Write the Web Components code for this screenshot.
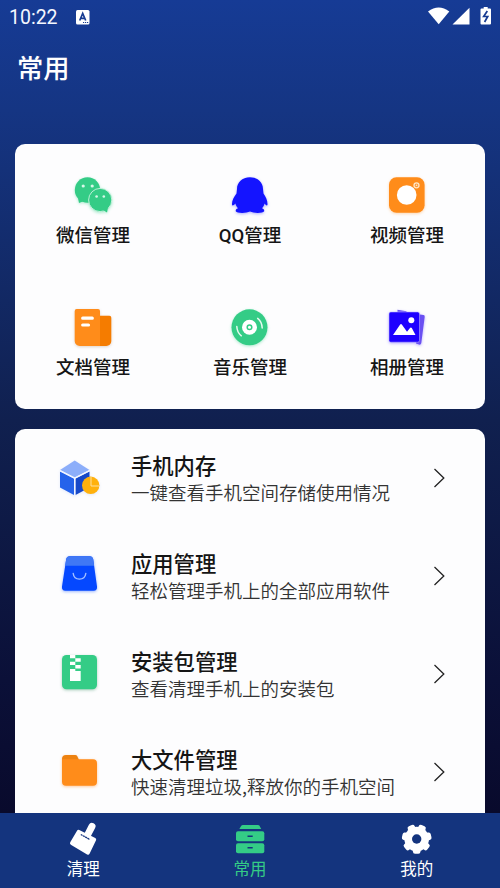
<!DOCTYPE html>
<html lang="zh-CN">
<head>
<meta charset="utf-8">
<title>常用</title>
<style>
html,body{margin:0;height:100%}
body{font-family:Roboto,"Noto Sans CJK SC",sans-serif;overflow:hidden}
</style>
</head>
<body>
<phone-app></phone-app>
<script>
const icons = {
wechat:['0 0 40 40','rgba(52,204,134,.4)',`<g fill="#34cc86"><circle cx="14.5" cy="15" r="12.7"/><path d="M5 23l1 5 5-2z"/><circle cx="27.2" cy="25" r="11.6" stroke="#c9f3df" stroke-width=".9"/><path d="M30 35l4 2.5 1-5z"/></g><g fill="#d8f7e8"><circle cx="10.2" cy="11" r="1.6"/><circle cx="19.2" cy="11" r="1.6"/><circle cx="23.6" cy="21.5" r="1.3"/><circle cx="30.8" cy="21.5" r="1.3"/></g>`],
qq:['0 0 40 40','rgba(20,20,255,.35)',`<path fill="#1414ff" d="M20 2.3C12 2.3 7 7.5 7 14L6.500 18.5C4 22 1.800 25.500 2 29.5C2.2 31.500 4.3 29.800 5.4 28.500C6 30.500 6.800 32 8 33.2C6 34 5.500 35 5.800 36.2C6.800 38.400 16 38.400 20 36.600C24 38.400 33 38.400 34.100 36.2C34.500 35 33.800 34 32 33.2C33.200 32 34 30.500 34.500 28.500C35.600 29.800 37.2 31.500 37.500 29.5C37.700 25.500 35.800 22 33.500 18.5L33 14C33 7.5 28 2.3 20 2.3Z"/>`],
video:['0 0 40 40','rgba(255,140,26,.35)',`<rect x="2" y="2.3" width="35.6" height="35.4" rx="7.5" fill="#ff8c1a"/><circle cx="19.7" cy="20" r="9.8" fill="#fff"/><circle cx="29.5" cy="10.3" r="2.5" fill="#ff9c38" stroke="#ffe7c8" stroke-width="1.3"/><circle cx="29.5" cy="10.3" r=".8" fill="#ffe7c8"/>`],
doc:['0 0 40 40','rgba(120,60,0,.22)',`<path fill="#f57c00" d="M25 8.7h11.3a2 2 0 0 1 2 2V34a5 5 0 0 1-5 5H25z"/><path fill="#ff8c1a" d="M3.7 2H25a2 2 0 0 1 2 2v35H6.700a5 5 0 0 1-5-5V4a2 2 0 0 1 2-2z"/><path d="M9.700 11.200h9.600M9.700 18h5.800" stroke="#fff" stroke-width="3.200" stroke-linecap="round"/>`],
music:['0 0 40 40','rgba(52,204,134,.4)',`<circle cx="19.500" cy="20.300" r="18" fill="#34cc86"/><circle cx="19.500" cy="20.300" r="7.500" fill="#fff"/><circle cx="19.500" cy="20.300" r="2.300" fill="none" stroke="#34cc86" stroke-width="1.500"/><path d="M6.800 19.500q.3 6 4.500 9.300M32.200 21q-.3-6.300-4.500-9.600" fill="none" stroke="#e6faf0" stroke-width="1.500" stroke-linecap="round"/>`],
album:['0 0 40 40','rgba(33,0,255,.3)',`<path fill="#6a50f2" d="M10.500 2.800l9 1.500V6h-9zM31 7.300l5.500.7a1.500 1.500 0 0 1 1.200 1.700L34.300 36a2 2 0 0 1-2.300 1.600L29 36.500z"/><rect x="2" y="5" width="30.500" height="30.200" rx="1.800" fill="#1e00ff" stroke="#c9c2ff" stroke-width=".5"/><path fill="#fff" d="M6 28l7-10.300q1-1.300 2 0l5 7 3-3.800q.9-1 1.800 0L28.500 28z"/><circle cx="24.300" cy="13.300" r="3" fill="#fff"/>`],
cube:['0 0 44 44','rgba(33,90,230,.12)',`<path fill="#8caefa" d="M16.700 4.500L31.500 14 16.700 21.600 2 14z"/><path fill="#2563eb" d="M2 15.500l14 7V39L2 31.500z"/><path fill="#1749c9" d="M17.500 22.500l14-7v16L17.500 39z"/><path d="M2 14.700l14.700 7.500 14.800-7.500M16.700 22v17.500" fill="none" stroke="#f3f6ff" stroke-width="1.300"/><circle cx="32.700" cy="29.300" r="8.700" fill="#ffb10d"/><path d="M33 21v9h8" fill="none" stroke="#ffe0a0" stroke-width="1"/>`],
bag:['0 0 44 44','rgba(0,72,255,.4)',`<path fill="#0548ff" d="M11.700 2.300h20c2 0 3 1.100 3.500 3L39 32.500c.4 2.700-.8 4.200-3.300 4.200H7.300c-2.500 0-3.700-1.500-3.300-4.200L8.200 5.300c.4-1.900 1.500-3 3.500-3z"/><path fill="#4078f5" d="M11.700 2.300h20c2 0 3 1.100 3.500 3l.9 6.400H7.200l1-6.400c.4-1.900 1.500-3 3.500-3z"/><path d="M15.200 19.500c1 7.500 11.500 7.500 12.600 0" fill="none" stroke="#a6c0ff" stroke-width="1.400" stroke-linecap="round"/>`],
zip:['0 0 44 44','rgba(20,120,70,.35)',`<rect x="4" y="3" width="35" height="34.300" rx="4.500" fill="#34cc86"/><path fill="#fff" d="M12 3h5.300v3.300h5.400v3.400h-5.400V13h5.400v3.400h-5.400V13H12V9.700h5.300V6.300H12zM12 17h5.300v2h5.400v10H12z"/>`],
folder:['0 0 44 44','rgba(255,120,0,.4)',`<path fill="#ed8210" d="M8 5h9.300q1.300 0 2 1.300l2.200 4.700V16H4V9a4 4 0 0 1 4-4z"/><path fill="#ff8c1a" d="M4 9.300h31a4 4 0 0 1 4 4v18.400a4 4 0 0 1-4 4H8a4 4 0 0 1-4-4z"/>`],
brush:['0 0 34 34','',`<path d="M26 4.300L20.500 15" stroke="#fff" stroke-width="7" stroke-linecap="round"/><path d="M12.500 9.500L28.500 17.500 22 31 5.700 21.200z" fill="#fff" stroke="#fff" stroke-width="3.400" stroke-linejoin="round"/><path d="M14.800 12.500l9 5" stroke="#14347e" stroke-width="1.300" stroke-dasharray="2 .5"/>`],
drawer:['0 0 34 34','',`<g fill="#34cc86"><path d="M9.800 3h15.200q1 0 1.500.8L28.200 7H6.300L8.300 3.800Q8.800 3 9.800 3z"/><rect x="3" y="9.200" width="28.300" height="10" rx="2"/><rect x="3" y="21.200" width="28.300" height="10" rx="2"/></g><path d="M14.500 14.200h5.200M14.500 25.700h5.200" stroke="#14347e" stroke-width="1.500"/>`],
gear:['0 0 34 34','',`<g fill="#fff"><circle cx="16.700" cy="17" r="12.300"/>${[0,1,2,3,4,5,6].map(i=>`<rect x="12.900" y="2.200" width="7.600" height="9" rx="2.200" transform="rotate(${180+i*360/7} 16.700 17)"/>`).join('')}</g><circle cx="16.700" cy="17" r="4.700" fill="#14347e"/>`]
};
const define = (name, render) => customElements.define(name, class extends HTMLElement {
  connectedCallback(){
    if(this.shadowRoot) return;
    this.attachShadow({mode:'open'}).innerHTML = render(this);
  }
});
define('ui-icon', el => {
  const [box, shadow, art] = icons[el.getAttribute('name')];
  const size = box.split(' ')[2];
  return `<style>:host{display:block;width:${size}px;height:${size}px;flex:none}svg{display:block;overflow:visible;${shadow?`filter:drop-shadow(0 1.500px 1.500px ${shadow})`:''}}</style><svg width="${size}" height="${size}" viewBox="${box}">${art}</svg>`;
});
define('status-bar', () => `<style>
:host{display:flex;align-items:center;height:34px;padding:0 9px;box-sizing:border-box;color:#f4f7ff;font-size:19.500px;line-height:34px}
span{padding-top:2px;font-weight:450}.a{margin-left:18px}.r{margin-left:auto;display:block}</style>
<span>10:22</span>
<svg class="a" width="14" height="15" viewBox="0 0 14 15"><rect width="13.500" height="14.500" rx="1.500" fill="#fff"/><path d="M3.700 10.500L6.700 3.500l3 7M4.800 8.300h3.800" fill="none" stroke="#173b91" stroke-width="1.700"/><path d="M7 12.500h6" stroke="#173b91" stroke-width="1.200" stroke-dasharray="1.200 .8"/></svg>
<svg class="r" width="64" height="20" viewBox="0 0 64 20"><g fill="#fff"><path d="M1 4.500Q11.700-3.500 22.300 4.500L11.700 17.200z"/><path d="M42.500 .8v16.800H25.500z"/><path d="M54.500 1.500h2.200V-.3h4v1.800H63q1 0 1 1v14q0 1-1 1h-8.500q-1 0-1-1v-14q0-1 1-1z"/></g><path d="M60.300 4l-3.600 5.500h4L57.600 15" fill="none" stroke="#173b91" stroke-width="1.700"/></svg>`);
define('grid-item', el => `<style>
:host{display:flex;flex-direction:column;align-items:center;height:132px}
span{margin-top:7px;font-size:18.500px;line-height:28px;font-weight:500;color:#151515;white-space:nowrap}</style>
<ui-icon name="${el.getAttribute('icon')}"></ui-icon><span><slot></slot></span>`);
define('list-row', el => `<style>
:host{display:flex;align-items:center;height:98px;padding:0 40px 0 43px}
.t{margin-left:29px;flex:1;white-space:nowrap}
b{display:block;font-size:21.300px;line-height:28px;font-weight:500;color:#151515;margin-top:5px}
p{margin:-2px 0 2px;font-size:18.500px;line-height:27px;font-weight:350;color:#333;font-family:"Noto Sans CJK SC",sans-serif}
svg{flex:none}</style>
<ui-icon name="${el.getAttribute('icon')}"></ui-icon>
<div class="t"><b><slot></slot></b><p><slot name="note"></slot></p></div>
<svg width="12" height="20" viewBox="0 0 12 20"><path d="M1.500 1l9.300 9-9.300 9" fill="none" stroke="#222" stroke-width="1.300"/></svg>`);
define('nav-item', el => `<style>
:host{flex:1;display:flex;flex-direction:column;align-items:center;padding-top:9px;color:#fff}
:host([active]){color:#34cc86}
span{font-size:16.500px;line-height:24px;margin-top:2px}</style>
<ui-icon name="${el.getAttribute('icon')}"></ui-icon><span><slot></slot></span>`);
define('white-card', () => `<style>:host{display:block;background:#fdfdfe;border-radius:10px;box-sizing:border-box}</style><slot></slot>`);
define('phone-app', () => `<style>
:host{display:flex;flex-direction:column;height:888px;width:500px;overflow:hidden}
main{height:813px;flex:none;overflow:hidden;background:linear-gradient(#163b95 0,#153583 110px,#10204f 420px,#0b1038 680px,#090a2c 813px)}
h1{margin:0;padding:16px 0 0 17px;height:94px;font-size:26.300px;line-height:38px;font-weight:500;color:#fff}
.grid{display:grid;grid-template-columns:repeat(3,157px);align-content:start;justify-content:center;height:265px;padding-top:31px;margin:0 15px}
.list{margin:20px 15px 0;height:420px}
nav{display:flex;height:75px;background:#14347e}</style>
<main><status-bar></status-bar><h1>常用</h1>
<white-card class="grid"><grid-item icon="wechat">微信管理</grid-item><grid-item icon="qq">QQ管理</grid-item><grid-item icon="video">视频管理</grid-item><grid-item icon="doc">文档管理</grid-item><grid-item icon="music">音乐管理</grid-item><grid-item icon="album">相册管理</grid-item></white-card>
<white-card class="list"><list-row icon="cube">手机内存<span slot="note">一键查看手机空间存储使用情况</span></list-row><list-row icon="bag">应用管理<span slot="note">轻松管理手机上的全部应用软件</span></list-row><list-row icon="zip">安装包管理<span slot="note">查看清理手机上的安装包</span></list-row><list-row icon="folder">大文件管理<span slot="note">快速清理垃圾,释放你的手机空间</span></list-row></white-card></main>
<nav><nav-item icon="brush">清理</nav-item><nav-item icon="drawer" active>常用</nav-item><nav-item icon="gear">我的</nav-item></nav>`);
</script>
</body>
</html>
